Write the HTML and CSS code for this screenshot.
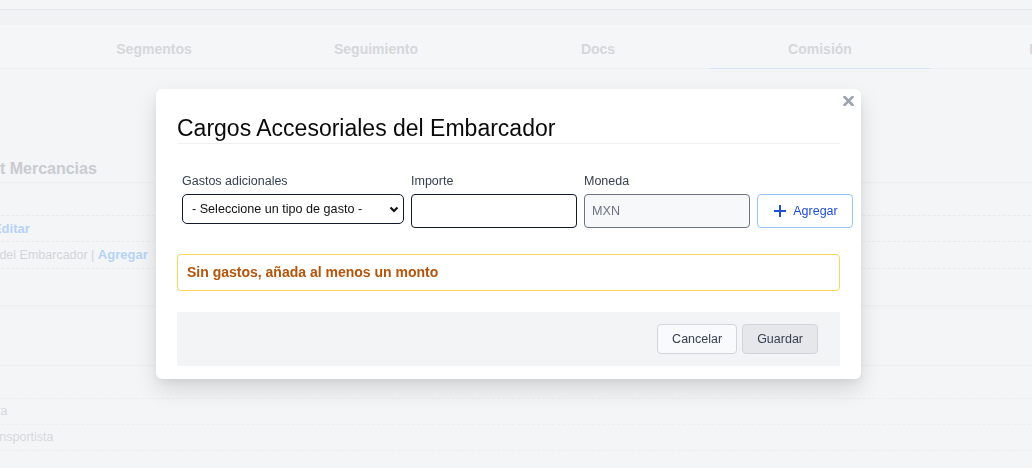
FILE: index.html
```html
<!DOCTYPE html>
<html lang="es">
<head>
    <meta charset="UTF-8">
    <meta name="viewport" content="width=device-width, initial-scale=1.0">
    <title>Cargos Accesoriales</title>
    <link rel="stylesheet" href="styles.css">
</head>
<body>

<div class="page">
    <div class="topbar"></div>
    <div class="band"></div>

    <nav class="tabs">
        <span class="tab">Cliente</span>
        <span class="tab">Segmentos</span>
        <span class="tab">Seguimiento</span>
        <span class="tab">Docs</span>
        <span class="tab active">Comisión</span>
        <span class="tab">Info</span>
    </nav>

    <section class="card">
        <h3 class="card-title">Datos Carta Port Mercancias</h3>
        <div class="card-row empty"></div>
        <div class="card-row">Datos Mercancías | <a href="#">Editar</a></div>
        <div class="card-row">Cargos Accesoriales del Embarcador | <a href="#">Agregar</a></div>
    </section>

    <section class="list">
        <div class="list-head"></div>
        <div class="list-row empty"></div>
        <div class="list-row">Ruta</div>
        <div class="list-row">Transportista</div>
    </section>
</div>

<div class="overlay">
    <div class="modal">
        <button class="close" type="button" aria-label="Cerrar">
            <svg width="11" height="10" viewBox="0 0 11 10">
                <path d="M1.5 1 L9.5 9 M9.5 1 L1.5 9" stroke="#9ca3af" stroke-width="2.6" stroke-linecap="square"/>
            </svg>
        </button>

        <h2 class="modal-title">Cargos Accesoriales del Embarcador</h2>

        <div class="form-row">
            <div class="field field-type">
                <span class="label">Gastos adicionales</span>
                <div class="select-wrap">
                    <select>
                        <option>- Seleccione un tipo de gasto -</option>
                    </select>
                    <svg class="chevron" width="10" height="7" viewBox="0 0 10 7">
                        <path d="M1.5 1.5 L5 5 L8.5 1.5" fill="none" stroke="#111" stroke-width="2.2"/>
                    </svg>
                </div>
            </div>
            <div class="field field-amount">
                <span class="label">Importe</span>
                <input type="text" class="input">
            </div>
            <div class="field field-currency">
                <span class="label">Moneda</span>
                <input type="text" class="input readonly" value="MXN" readonly>
            </div>
            <div class="field field-btn">
                <span class="label">&nbsp;</span>
                <button class="btn-add" type="button">
                    <svg width="16" height="16" viewBox="0 0 16 16">
                        <path d="M8 2 V14 M2 8 H14" stroke="#1d4ed8" stroke-width="2"/>
                    </svg>
                    Agregar
                </button>
            </div>
        </div>

        <div class="alert">Sin gastos, añada al menos un monto</div>

        <div class="modal-footer">
            <button class="btn" type="button">Cancelar</button>
            <button class="btn btn-save" type="button">Guardar</button>
        </div>
    </div>
</div>

</body>
</html>
```

FILE: styles.css
```css
body {
    margin: 0;
    padding: 0;
    height: 100vh;
    overflow: hidden;
    font-family: 'Liberation Sans', Arial, sans-serif;
    background: #f4f5f7;
    color: #d3d5d9;
}

/* Page behind the modal (faded) */
.page {
    margin-left: -179px;
    width: 1400px;
}

.topbar {
    height: 9px;
    border-bottom: 1px solid #e7e8eb;
}

.band {
    height: 15px;
    background: #f1f2f4;
}

.tabs {
    display: flex;
    background: #f5f6f8;
}

.tab {
    flex: none;
    width: 222px;
    height: 39px;
    padding-top: 4px;
    display: flex;
    align-items: center;
    justify-content: center;
    font-size: 14px;
    font-weight: bold;
    color: #d6d7db;
    border-bottom: 1px solid #eceef0;
}

.tab.active {
    border-bottom-color: #d3e3f8;
}

.card {
    margin-top: 81px;
    padding-bottom: 36px;
    box-shadow: 0 2px 3px rgba(0, 0, 0, 0.025);
}

.card-title {
    margin: 0;
    height: 26px;
    padding: 6px 0 0 58px;
    line-height: 26px;
    font-size: 16px;
    color: #c9cbd0;
    border-bottom: 1px solid #eceef0;
}

.card-row {
    height: 25px;
    line-height: 25px;
    padding-left: 61px;
    font-size: 12.5px;
    border-bottom: 1px dashed #e9eaed;
}

.card-row:last-child {
    height: 26px;
}

.card-row.empty {
    height: 32px;
}

.card-row a {
    color: #b6d3f7;
    font-weight: bold;
    font-size: 13px;
    text-decoration: none;
}

.list-head {
    height: 60px;
    border-bottom: 1px solid #eceef0;
}

.list-row {
    height: 25px;
    line-height: 25px;
    padding-left: 160px;
    font-size: 12.5px;
    color: #d6d8dc;
    border-bottom: 1px dashed #eceef0;
}

.list-row.empty {
    height: 32px;
}

/* Modal */
.overlay {
    position: fixed;
    top: 0;
    left: 0;
    right: 0;
    bottom: 0;
    padding: 89px 0 0 156px;
}

.modal {
    position: relative;
    width: 705px;
    box-sizing: border-box;
    padding: 25px 21px 13px;
    background: #fff;
    border-radius: 6px;
    box-shadow: 0 10px 22px rgba(0, 0, 0, 0.13), 0 3px 8px rgba(0, 0, 0, 0.05);
}

.close {
    position: absolute;
    top: 7px;
    right: 7px;
    padding: 0;
    border: none;
    background: none;
    line-height: 0;
    cursor: pointer;
}

.modal-title {
    margin: 0;
    padding-bottom: 1px;
    font-size: 23px;
    line-height: 28px;
    font-weight: normal;
    color: #0a0a0a;
    border-bottom: 1px solid #eff0f2;
}

.form-row {
    display: flex;
    align-items: flex-start;
    gap: 7px;
    margin-top: 28px;
    padding-left: 5px;
}

.field {
    flex: none;
    display: flex;
    flex-direction: column;
}

.field-type { width: 222px; }
.field-amount { width: 166px; }
.field-currency { width: 166px; }
.field-btn { width: 96px; }

.label {
    height: 18px;
    margin-bottom: 4px;
    font-size: 12.5px;
    line-height: 18px;
    color: #374151;
}

.select-wrap {
    position: relative;
}

.select-wrap select {
    width: 100%;
    height: 30px;
    box-sizing: border-box;
    padding: 0 24px 0 9px;
    appearance: none;
    -webkit-appearance: none;
    border: 1px solid #111827;
    border-radius: 5px;
    background: #fff;
    font-family: inherit;
    font-size: 12.6px;
    color: #111;
}

.chevron {
    position: absolute;
    right: 5px;
    top: 12px;
}

.input {
    width: 100%;
    height: 34px;
    box-sizing: border-box;
    padding: 0 7px;
    border: 1px solid #111827;
    border-radius: 4px;
    font-family: inherit;
    font-size: 12.6px;
    color: #111;
}

.input.readonly {
    background: #f7f8fa;
    border-color: #6b7280;
    color: #6b7280;
}

.btn-add {
    height: 34px;
    width: 96px;
    display: flex;
    align-items: center;
    justify-content: center;
    gap: 5px;
    padding: 0;
    border: 1px solid #93c5fd;
    border-radius: 4px;
    background: #fff;
    font-family: inherit;
    font-size: 12.5px;
    color: #1d4ed8;
    cursor: pointer;
}

.alert {
    margin-top: 26px;
    padding: 9px 9px;
    line-height: 17px;
    font-size: 14px;
    font-weight: bold;
    color: #b45309;
    border: 1px solid #f9d55c;
    border-radius: 4px;
}

.modal-footer {
    display: flex;
    justify-content: flex-end;
    gap: 5px;
    margin-top: 21px;
    padding: 12px 22px;
    background: #f3f4f6;
}

.btn {
    height: 30px;
    padding: 0 14px;
    border: 1px solid #d1d5db;
    border-radius: 4px;
    background: #f9fafb;
    font-family: inherit;
    font-size: 12.5px;
    color: #374151;
    cursor: pointer;
}

.btn-save {
    background: #e5e7eb;
}
```
